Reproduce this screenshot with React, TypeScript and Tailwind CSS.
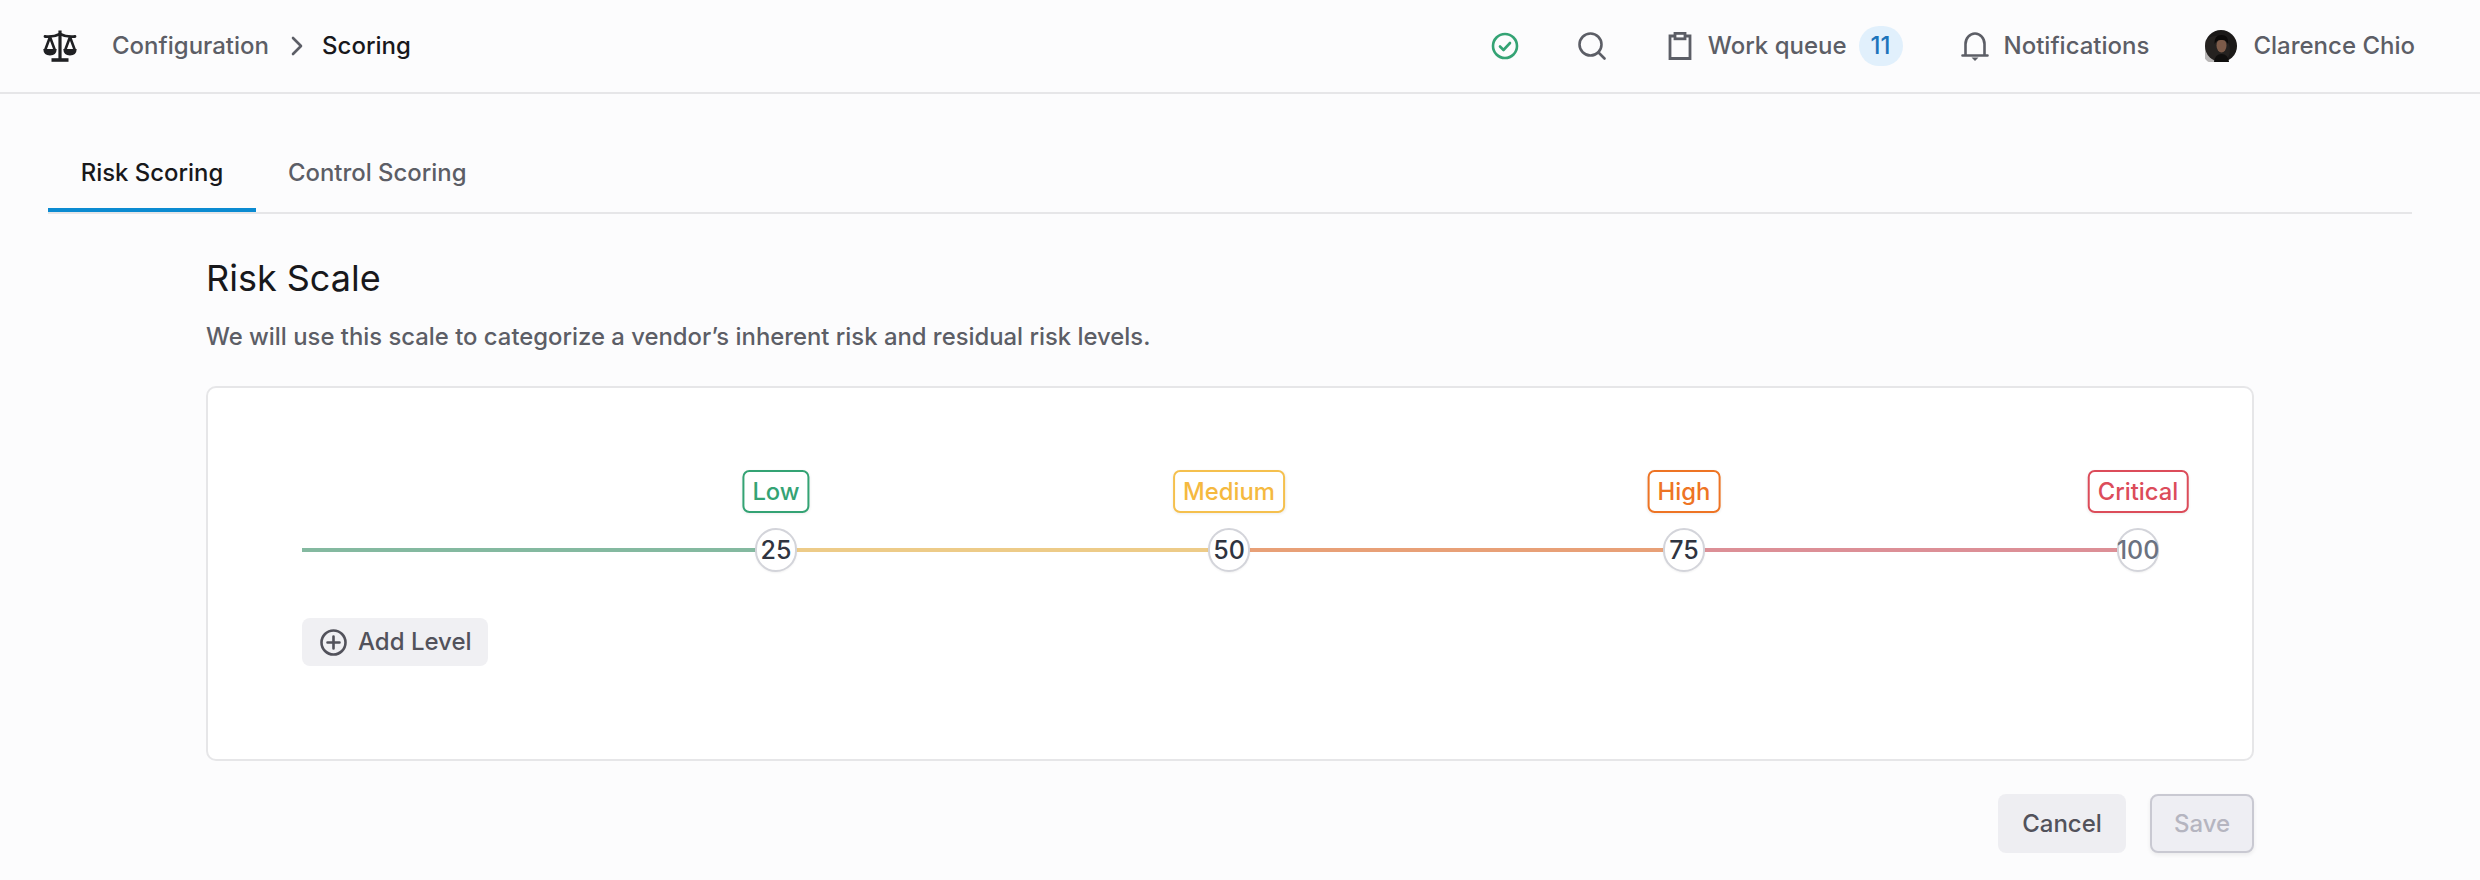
import React from "react";

const font = { fontFamily: "Inter, 'Liberation Sans', sans-serif" };

function ScaleIcon() {
  return (
    <svg width="34" height="32" viewBox="0 0 34 32" fill="none" className="shrink-0">
      <path d="M17 0.5v30" stroke="#1f2023" strokeWidth="3.2" />
      <path d="M8.5 30h17" stroke="#1f2023" strokeWidth="3.6" />
      <path d="M2 6.5 Q10 7.5 17 4 Q24 7.5 32 6.5" stroke="#1f2023" strokeWidth="2.8" strokeLinecap="round" />
      <path d="M7 7 L2.2 20 M7 7 L11.8 20 M27 7 L22.2 20 M27 7 L31.8 20" stroke="#1f2023" strokeWidth="2.6" />
      <path d="M0.3 19 H13.7 Q13.5 25.5 7 25.5 Q0.5 25.5 0.3 19Z M20.3 19 H33.7 Q33.5 25.5 27 25.5 Q20.5 25.5 20.3 19Z" fill="#1f2023" />
    </svg>
  );
}

function Check() {
  return (
    <svg width="28" height="28" viewBox="0 0 28 28" fill="none" className="shrink-0">
      <circle cx="14" cy="14" r="12" stroke="#34a374" strokeWidth="2.6" />
      <path d="M9 14.5l3.5 3.5 6.5-7" stroke="#34a374" strokeWidth="2.6" strokeLinecap="round" strokeLinejoin="round" />
    </svg>
  );
}

function Search() {
  return (
    <svg width="28" height="28" viewBox="0 0 28 28" fill="none" className="shrink-0">
      <circle cx="12.5" cy="12.5" r="11" stroke="#5c5e66" strokeWidth="2.6" />
      <path d="M20.5 20.5l6 6" stroke="#5c5e66" strokeWidth="2.6" strokeLinecap="round" />
    </svg>
  );
}

function Clip() {
  return (
    <svg width="24" height="28" viewBox="0 0 24 28" fill="none" className="shrink-0">
      <path d="M7 4H2v22.5h20V4h-5" stroke="#5c5e66" strokeWidth="2.8" />
      <rect x="7" y="1.4" width="10" height="5.4" stroke="#5c5e66" strokeWidth="2.8" />
    </svg>
  );
}

function Bell() {
  return (
    <svg width="28" height="29" viewBox="0 0 28 29" fill="none" className="shrink-0">
      <path d="M1.5 23.5h25M4.5 23.5V12a9.5 10.5 0 0 1 19 0v11.5" stroke="#5c5e66" strokeWidth="2.6" strokeLinecap="round" />
      <path d="M10.5 25.5h7L14 29Z" fill="#5c5e66" />
    </svg>
  );
}

function Avatar() {
  return (
    <svg width="32" height="32" viewBox="0 0 32 32" className="shrink-0">
      <circle cx="16" cy="16" r="16" fill="#1b1918" />
      <circle cx="11" cy="20" r="14" fill="#3a3532" opacity="0.35" />
      <ellipse cx="16.5" cy="15.5" rx="5" ry="7" fill="#7d5b49" />
      <path d="M9.5 14 Q9 5 16.5 5 Q24 5 23 14 Q21 9.5 16.5 10 Q12 9.5 9.5 14Z" fill="#0c0a09" />
      <path d="M9 32 Q10 24 16.5 24 Q23 24 24 32Z" fill="#0f0e0d" />
    </svg>
  );
}

function Plus() {
  return (
    <svg width="27" height="27" viewBox="0 0 27 27" fill="none" className="shrink-0">
      <circle cx="13.5" cy="13.5" r="12" stroke="#52525b" strokeWidth="2.6" />
      <path d="M13.5 7.5v12M7.5 13.5h12" stroke="#52525b" strokeWidth="2.6" strokeLinecap="round" />
    </svg>
  );
}

function Node({ value, label, tagClass, textClass }: { value: string; label: string; tagClass: string; textClass: string }) {
  return (
    <div className="relative z-10 flex h-[44px] w-[42px] shrink-0 items-center justify-center rounded-full border-2 border-[#d3d4da] bg-white -mx-[1px] shadow-[0_1px_2px_rgba(0,0,0,0.05)]">
      <span className={`text-[25px] leading-none ${textClass}`}>{value}</span>
      <div className={`absolute bottom-[57px] left-1/2 flex h-[43px] -translate-x-1/2 items-center whitespace-nowrap rounded-[7px] border-2 bg-white px-[8px] text-[23.8px] leading-none font-medium shadow-[0_1px_3px_rgba(0,0,0,0.07)] ${tagClass}`}>
        {label}
      </div>
    </div>
  );
}

export default function App() {
  return (
    <div className="h-[880px] w-[2480px] overflow-hidden bg-[#fcfcfd] font-[450]" style={font}>
      <header className="flex h-[94px] items-center border-b-2 border-[#e6e6e8] pl-[43px] pr-[65px] text-[24px] leading-none text-[#5c5e66]">
        <ScaleIcon />
        <span className="ml-[35px]">Configuration</span>
        <svg width="12" height="20" viewBox="0 0 12 20" fill="none" className="ml-[22px]">
          <path d="M2 2l8 8-8 8" stroke="#5c5e66" strokeWidth="2.6" strokeLinecap="round" strokeLinejoin="round" />
        </svg>
        <span className="ml-[19px] text-[#18181b]">Scoring</span>
        <div className="ml-auto flex items-center">
          <Check />
          <div className="ml-[59px]"><Search /></div>
          <div className="ml-[62px]"><Clip /></div>
          <span className="ml-[16px]">Work queue</span>
          <span className="ml-[12px] flex h-[40px] w-[44px] items-center justify-center rounded-full bg-[#e1f0fc] text-[#1c74bb]">11</span>
          <div className="ml-[58px]"><Bell /></div>
          <span className="ml-[15px]">Notifications</span>
          <div className="ml-[56px]"><Avatar /></div>
          <span className="ml-[16px]">Clarence Chio</span>
        </div>
      </header>

      <div className="flex h-[120px] items-end pl-[48px] pr-[68px]">
        <div className="flex w-full border-b-2 border-[#e6e6e8] text-[23.9px] leading-none">
          <div className="-mb-[2px] flex h-[58px] w-[208px] justify-center border-b-4 border-[#0b8bd1] pt-[7px] text-[#18181b]">Risk Scoring</div>
          <div className="ml-[32px] flex h-[58px] pt-[7px] text-[#5c5e66]">Control Scoring</div>
        </div>
      </div>

      <main className="ml-[206px] w-[2048px]">
        <h1 className="mt-[42px] text-[36px] leading-[44px] font-normal text-[#18181b]">Risk Scale</h1>
        <p className="mt-[21px] text-[23.85px] leading-[32px] text-[#5c5e66]">We will use this scale to categorize a vendor’s inherent risk and residual risk levels.</p>

        <section className="mt-[33px] h-[375px] rounded-[10px] border-2 border-[#e6e6e8] bg-white pl-[94px] pt-[140px]">
          <div className="flex h-[44px] items-center">
            <div className="h-[4px] w-[454px] bg-[#84b9a0]" />
            <Node value="25" label="Low" tagClass="border-[#34a374] text-[#34a374]" textClass="text-[#2f3440]" />
            <div className="h-[4px] w-[413px] bg-[#edcb88]" />
            <Node value="50" label="Medium" tagClass="border-[#f5c04e] text-[#f5b93f]" textClass="text-[#2f3440]" />
            <div className="h-[4px] w-[415px] bg-[#e8a077]" />
            <Node value="75" label="High" tagClass="border-[#ee7424] text-[#ee7424]" textClass="text-[#2f3440]" />
            <div className="h-[4px] w-[414px] bg-[#dc8f96]" />
            <Node value="100" label="Critical" tagClass="border-[#dc4c5a] text-[#dc4c5a]" textClass="text-[#6b7280]" />
          </div>
          <button className="mt-[46px] flex h-[48px] w-[186px] items-center gap-[11px] rounded-[8px] bg-[#f0f0f3] pl-[18px] text-[24px] leading-none text-[#52525b]">
            <Plus />
            Add Level
          </button>
        </section>

        <div className="mt-[33px] flex justify-end gap-[24px] text-[24px] leading-none">
          <button className="flex h-[59px] w-[128px] items-center justify-center rounded-[8px] bg-[#eeeef2] text-[#52525b]">Cancel</button>
          <button className="flex h-[59px] w-[104px] items-center justify-center rounded-[8px] border-2 border-[#c9c9d2] bg-[#eeeef3] text-[#b5b5c0] shadow-[0_2px_4px_rgba(0,0,0,0.07)]">Save</button>
        </div>
      </main>
    </div>
  );
}
